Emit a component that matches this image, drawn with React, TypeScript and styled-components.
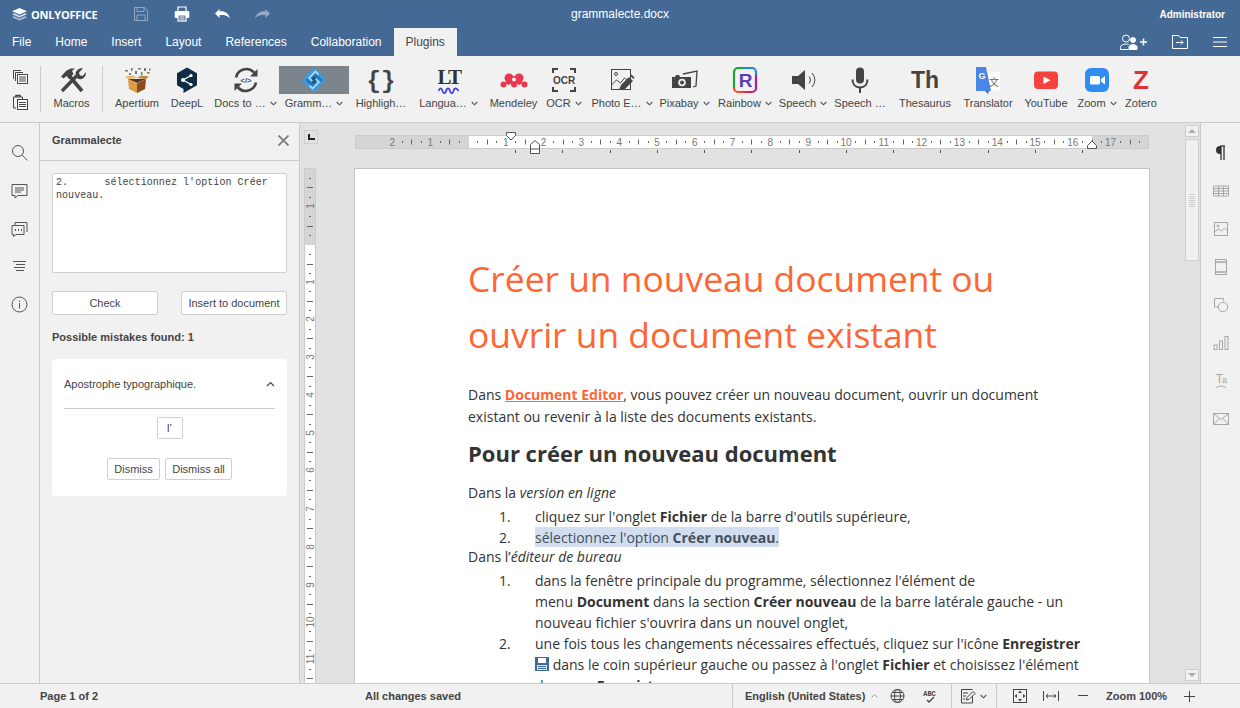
import React from "react";
import styled, { createGlobalStyle } from "styled-components";

const Global = createGlobalStyle`
  html, body { margin: 0; height: 708px; overflow: hidden; background: #f1f1f1; }
  * { box-sizing: border-box; }
  #root { height: 708px; }
`;

const App_ = styled.div`
  height: 708px; display: flex; flex-direction: column;
  font-family: "Liberation Sans", Arial, sans-serif; font-size: 11px; color: #444; overflow: hidden;
`;
const Header = styled.header`background: #446995; height: 56px; color: #fff; flex: none;`;
const TitleRow = styled.div`height: 28px; display: grid; grid-template-columns: 1fr auto 1fr; align-items: center;`;
const LeftCluster = styled.div`display: flex; align-items: center;`;
const Logo = styled.div`width: 121px; padding-left: 12px; display: flex; align-items: center; gap: 4px;`;
const LogoText = styled.span`font: 700 11px "Open Sans", sans-serif; letter-spacing: -0.2px; color: #fff;`;
const QuickBtn = styled.div<{ $dim?: boolean }>`
  width: 40.5px; height: 28px; display: flex; align-items: center; justify-content: center; opacity: ${p => (p.$dim ? 0.42 : 1)};
`;
const Mirror = styled.span`display: inline-flex; transform: scaleX(-1);`;
const DocTitle = styled.div`font-size: 12px; color: #fff;`;
const UserName = styled.div`justify-self: end; padding-right: 15px; font-weight: 700; font-size: 10px; color: #fff;`;
const TabRow = styled.div`height: 28px; display: flex; align-items: stretch;`;
const Tab = styled.div<{ $active?: boolean }>`
  padding: 0 12px; font-size: 12px; display: flex; align-items: center;
  background: ${p => (p.$active ? "#f1f1f1" : "transparent")}; color: ${p => (p.$active ? "#444" : "#fff")};
`;
const TabTools = styled.div`margin-left: auto; display: flex; align-items: center; padding-right: 3px;`;
const TabTool = styled.div<{ $w: number }>`width: ${p => p.$w}px; display: flex; justify-content: center; align-items: center;`;

const Toolbar = styled.div`height: 67px; flex: none; background: #f1f1f1; border-bottom: 1px solid #cbcbcb; display: flex; padding-top: 10px;`;
const ClipGroup = styled.div`width: 40px; height: 45px; display: flex; flex-direction: column; align-items: center; gap: 9px; padding-top: 3px;`;
const Sep = styled.div`width: 1px; height: 46px; background: #cbcbcb; flex: none;`;
const Item = styled.div<{ $w: number; $ml?: number }>`
  width: ${p => p.$w}px; margin-left: ${p => p.$ml ?? 0}px; flex: none; display: flex; flex-direction: column; align-items: center;
`;
const IconBox = styled.div<{ $on?: boolean }>`
  height: 28px; width: 100%; display: flex; align-items: center; justify-content: center; background: ${p => (p.$on ? "#7d858c" : "transparent")};
`;
const Label = styled.div`margin-top: 2px; height: 14px; line-height: 14px; font-size: 11px; color: #444; white-space: nowrap; display: flex; align-items: center; gap: 4px;`;

const Work = styled.div`flex: 1; display: flex; min-height: 0; background: #e2e2e2;`;
const Rail = styled.div<{ $left?: boolean }>`
  width: 40px; flex: none; background: #f1f1f1; display: flex; flex-direction: column; padding-top: ${p => (p.$left ? 10 : 11)}px;
  ${p => (p.$left ? "border-right: 1px solid #cbcbcb;" : "border-left: 1px solid #cbcbcb;")}
`;
const RailBtn = styled.div`height: 38px; display: flex; align-items: center; justify-content: center;`;
const Panel = styled.aside`width: 260px; flex: none; background: #f1f1f1; border-right: 1px solid #cbcbcb; display: flex; flex-direction: column;`;
const PanelHead = styled.div`height: 38px; border-bottom: 1px solid #cbcbcb; display: flex; align-items: center; justify-content: space-between; padding: 0 10px 3px 12px; font-weight: 700; font-size: 11px;`;
const PanelBody = styled.div`padding: 12px 12px 0; display: flex; flex-direction: column;`;
const TextBox = styled.div`
  height: 100px; background: #fff; border: 1px solid #cfcfcf; border-radius: 2px; padding: 2px 3px;
  font: 10px/13px "Liberation Mono", monospace; letter-spacing: 0.05px; color: #444; white-space: pre-wrap;
`;
const BtnRow = styled.div`display: flex; justify-content: space-between; margin-top: 18px;`;
const PanelBtn = styled.div<{ $w: number; $h?: number }>`
  width: ${p => p.$w}px; height: ${p => p.$h ?? 24}px; background: #fff; border: 1px solid #cfcfcf; border-radius: 2px;
  display: flex; align-items: center; justify-content: center; font-size: 11px; color: #444; white-space: nowrap;
`;
const Found = styled.div`margin-top: 16px; font-weight: 700; font-size: 11px; line-height: 13px;`;
const Card = styled.div`margin-top: 15px; height: 137px; background: #fff; border-radius: 4px; padding: 0 12px; display: flex; flex-direction: column;`;
const CardHead = styled.div`height: 50px; border-bottom: 1px solid #cbcbcb; display: flex; align-items: center; justify-content: space-between; font-size: 11px;`;
const Center = styled.div<{ $mt: number; $gap?: number }>`display: flex; justify-content: center; margin-top: ${p => p.$mt}px; gap: ${p => p.$gap ?? 0}px;`;

const Canvas = styled.main`flex: 1; min-width: 0; display: flex;`;
const CanvasMain = styled.div`flex: 1; min-width: 0; display: flex; flex-direction: column; overflow: hidden;`;
const RulerRow = styled.div`height: 45px; flex: none; display: flex; padding: 7px 0 0 4px;`;
const Corner = styled.div`width: 14px; height: 14px; border: 1px solid #cfcfcf; background: #e2e2e2; flex: none;`;
const CornerMark = styled.div`width: 7px; height: 6px; border-left: 2px solid #222; border-bottom: 2px solid #222; margin: 3px 0 0 3px;`;
const RulerSvg = styled.svg`margin-left: 37px; margin-top: -1px; overflow: visible; flex: none;`;
const PageRow = styled.div`flex: 1; min-height: 0; display: flex; padding-left: 4px; overflow: hidden;`;
const VRulerSvg = styled.svg`flex: none;`;
const Page = styled.article`
  width: 796px; height: 1100px; margin-left: 37px; flex: none; background: #fff; border: 1px solid #c2c2c2; border-bottom: 0;
  padding: 81px 0 0 113px; font: 14px/21px "Open Sans", sans-serif; color: #333;
`;
const H1 = styled.h1`margin: 0; font: 400 35.4px/56px "Open Sans", sans-serif; color: #ff6633; width: 600px;`;
const P = styled.p<{ $mt?: number; $mb?: number }>`margin: ${p => p.$mt ?? 0}px 0 ${p => p.$mb ?? 0}px; width: 600px;`;
const Intro = styled(P)`line-height: 22px;`;
const H2 = styled.h2`margin: 10px 0 0; font: 700 22px/30px "Open Sans", sans-serif; color: #333;`;
const DocLink = styled.a`color: #ff6633; font-weight: 700; text-decoration: underline;`;
const Li = styled.div`display: flex; padding-left: 31px;`;
const Num = styled.span`width: 36px; flex: none;`;
const LiText = styled.div`width: 560px;`;
const Sel = styled.span`background: #d2deef; color: #444f5e; padding: 1px 0 0; box-decoration-break: clone;`;
const FloppySvg = styled.svg`vertical-align: -1px;`;

const Scroll = styled.div`width: 14px; margin-right: 1px; padding-top: 2px; flex: none; display: flex; flex-direction: column; gap: 2px;`;
const ScrollBtn = styled.div<{ $mb?: number }>`height: 12px; margin-bottom: ${p => p.$mb ?? 0}px; background: #f1f1f1; border: 1px solid #cfcfcf; display: flex; align-items: center; justify-content: center;`;
const Arrow = styled.div<{ $down?: boolean }>`
  width: 0; height: 0; border-left: 4px solid transparent; border-right: 4px solid transparent;
  ${p => (p.$down ? "border-top: 4px solid #adadad;" : "border-bottom: 4px solid #adadad;")}
`;
const Thumb = styled.div`height: 122px; background: #f1f1f1; border: 1px solid #cfcfcf; display: flex; flex-direction: column; align-items: center; justify-content: center; gap: 1px;`;
const Grip = styled.div`width: 6px; height: 1px; background: #cfcfcf;`;
const ScrollGap = styled.div`flex: 1;`;

const Status = styled.footer`height: 25px; flex: none; background: #f1f1f1; border-top: 1px solid #cbcbcb; display: flex; align-items: stretch; font-weight: 700; font-size: 11px;`;
const StatusText = styled.div<{ $w: number; $pl: number; $ml?: number }>`width: ${p => p.$w}px; padding-left: ${p => p.$pl}px; margin-left: ${p => p.$ml ?? 0}px; flex: none; display: flex; align-items: center; white-space: nowrap;`;
const StatusGroup = styled.div<{ $w: number; $border?: boolean }>`
  width: ${p => p.$w}px; display: flex; align-items: center; flex: none; border-left: ${p => (p.$border ? "1px solid #cbcbcb" : "0")};
`;
const StatusIcon = styled.div<{ $w: number; $ml?: number; $mr?: number }>`width: ${p => p.$w}px; margin-left: ${p => p.$ml ?? 0}px; margin-right: ${p => p.$mr ?? 0}px; display: flex; justify-content: center; flex: none; align-items: center;`;

const Caret = () => (
  <svg width="7" height="5" viewBox="0 0 7 5" fill="none" stroke="#555" strokeWidth="1.1"><path d="M.7 1l2.8 2.8L6.3 1" /></svg>
);

const Sv = ({ s = 28, v = 28, children, ...r }: any) => (
  <svg width={s} height={s} viewBox={`0 0 ${v} ${v}`} fill="none" {...r}>{children}</svg>
);

const g = "#444";
const Copy = () => (
  <Sv s={16} v={16} stroke={g}><path d="M1.5 10V1.5H9" /><path d="M3.5 12V3.5H11" /><rect x="5.5" y="5.5" width="10" height="9" fill="#fff" /><path d="M7 8h7M7 10h7M7 12h7" /></Sv>
);
const Paste = () => (
  <Sv s={16} v={16} stroke={g}><path d="M4 14H1.5V3h9v2" /><path d="M4 3V1.5h4V3" strokeWidth="1.5" /><rect x="5.5" y="5.5" width="10" height="10" fill="#fff" /><path d="M7 8.5h7M7 10.5h7M7 12.5h7" /></Sv>
);
const Macros = () => (
  <Sv>
    <path d="M24 25L11 9.500" stroke={g} strokeWidth="3.600" />
    <path d="M3 10.500L8.500 4.500 13 2.500h4l-3 2.500 1.500 3L11 13 8.500 10 5.500 12.500z" fill={g} />
    <path d="M4 25L19 9.500" stroke={g} strokeWidth="3.400" />
    <path d="M17.500 7a6 6 0 0 1 7.500-4.500L21 6.500l.8 2.700 2.700.8L28 6.300a6 6 0 0 1-8.500 6.200z" fill={g} />
  </Sv>
);
const Apertium = () => (
  <Sv>
    <path d="M5 13h18l-9 4z" fill="#5e3213" />
    <path d="M5 13l9 4.500V27L6 23z" fill="#dc9c42" />
    <path d="M23 13l-9 4.500V27l8-4z" fill="#8a4a1b" />
    <path d="M5 13l-3-2.500 8-1 4 2.500z" fill="#eab566" />
    <path d="M23 13l3-2.500-8-1-4 2.500z" fill="#c28534" />
    <g fill="#777">
      <rect x="2" y="4" width="3" height="1.500" /><rect x="6" y="7" width="2" height="2" /><rect x="8" y="2" width="1.500" height="3" />
      <rect x="12" y="5" width="2" height="3" /><rect x="15" y="2" width="3" height="1.500" /><rect x="18" y="6" width="1.500" height="3" />
      <rect x="21" y="2" width="2" height="3" /><rect x="24" y="6" width="2.500" height="1.500" /><rect x="26" y="2.500" width="1.500" height="2" />
    </g>
  </Sv>
);
const DeepL = () => (
  <Sv>
    <path d="M14 1.500l10 5.700v12L14 25l-3.500 2v-4L4 19.200v-12z" fill="#0f2b46" />
    <path d="M10 14l8-4.500M10 14l8 4.500" stroke="#fff" strokeWidth="1.400" />
    <circle cx="10" cy="14" r="2" fill="#fff" /><circle cx="18" cy="9.500" r="1.600" fill="#fff" /><circle cx="18" cy="18.500" r="1.600" fill="#fff" />
  </Sv>
);
const Docs = () => (
  <Sv>
    <path d="M4 11.500A10.500 10.500 0 0 1 22 6.500" stroke={g} strokeWidth="2.600" />
    <path d="M24 16.500A10.500 10.500 0 0 1 6 21.500" stroke={g} strokeWidth="2.600" />
    <path d="M25.500 3v7.500h-7.500z" fill={g} /><path d="M2.500 25v-7.500H10z" fill={g} />
    <text x="14" y="17" fontSize="7.500" fontWeight="700" textAnchor="middle" fill={g} fontFamily="Liberation Sans">{"</>"}</text>
  </Sv>
);
const Gramm = () => (
  <Sv>
    <path d="M14 1.500L26.500 14 14 26.500 1.500 14z" fill="#3f9bdc" />
    <path d="M14 5.500L22.500 14 14 22.500 5.500 14z" fill="#2476b4" />
    <path d="M18.500 8.500L15.500 5.500 9 12l3 3M9.500 19.500l3 3L19 16l-3-3" stroke="#a8dcf7" strokeWidth="1.800" />
    <path d="M15 11l-2.500 2.500M15.500 14.500L13 17" stroke="#123f66" strokeWidth="1.500" />
  </Sv>
);
const Braces = () => (
  <Sv><text x="14" y="22" fontSize="24" fontWeight="700" textAnchor="middle" fill={g} fontFamily="Liberation Mono">{"{}"}</text></Sv>
);
const Lang = () => (
  <Sv>
    <text x="14" y="18" fontSize="21" textAnchor="middle" fill="#333" fontFamily="Liberation Serif" fontWeight="700" letterSpacing="-1.500">LT</text>
    <path d="M3.500 25c1.500-3.500 3-3.500 4 0 1.300 3 2.700 3 3.500 0 1-3.500 3-3.500 4 0 1 3 2.500 3 3.500 0 1-3.500 3-3.500 5 0" stroke="#4141d8" strokeWidth="1.800" />
  </Sv>
);
const Mendeley = () => (
  <Sv>
    <g fill="#e8384f">
      <circle cx="3.500" cy="18.500" r="3" /><circle cx="24.500" cy="18.500" r="3" /><circle cx="14" cy="18.500" r="3" />
      <circle cx="9" cy="12" r="4.500" /><circle cx="19" cy="12" r="4.500" />
      <path d="M5 17l4-7h10l4 7-4 2-5-3-5 3z" />
    </g>
    <circle cx="14" cy="13.500" r="2" fill="#f1f1f1" />
  </Sv>
);
const Ocr = () => (
  <Sv>
    <path d="M8 3H3v4M20 3h5v4M3 21v4h5M25 21v4h-5" stroke={g} strokeWidth="2" />
    <text x="14" y="18" fontSize="10" fontWeight="700" textAnchor="middle" fill={g} fontFamily="Liberation Sans">OCR</text>
  </Sv>
);
const Photo = () => (
  <Sv>
    <rect x="3.500" y="3.500" width="19" height="20" stroke={g} />
    <circle cx="8" cy="8" r="1.500" stroke={g} />
    <path d="M3.500 19l5-5 4 3 4-5 4 3" stroke={g} />
    <path d="M11 24l2-5 8-8 4 4-8 8z" fill={g} /><path d="M22 9.500l1.500-1 3 3-1 1.500z" fill={g} />
  </Sv>
);
const Pixabay = () => (
  <Sv>
    <path d="M12 8l14-3-1 15-3 1" stroke={g} strokeWidth="1.300" />
    <path d="M1 11h3l1-2h3l1 2h11v11H1z" fill={g} />
    <circle cx="11" cy="16.500" r="3.800" fill="#f1f1f1" /><circle cx="11" cy="16.500" r="2" fill={g} />
  </Sv>
);
const Rainbow = () => (
  <Sv>
    <defs>
      <linearGradient id="rbw" x1="0" y1="1" x2="1" y2="0">
        <stop offset="0" stopColor="#f5611e" /><stop offset=".35" stopColor="#e7175f" /><stop offset=".55" stopColor="#b31aa0" /><stop offset="1" stopColor="#c4148a" />
      </linearGradient>
    </defs>
    <path d="M3 9V6a4 4 0 0 1 4-4h5" stroke="#1ea739" strokeWidth="2.200" />
    <path d="M12 2h9a4 4 0 0 1 4 4v3" stroke="#1e88e0" strokeWidth="2.200" />
    <path d="M3 9v12" stroke="#1ea739" strokeWidth="2.200" />
    <path d="M25 9v13a4 4 0 0 1-4 4H7a4 4 0 0 1-4-4v-1" stroke="url(#rbw)" strokeWidth="2.200" />
    <text x="14.500" y="21" fontSize="19" fontWeight="700" textAnchor="middle" fill="#5a3fb6" fontFamily="Liberation Sans">R</text>
  </Sv>
);
const Speaker = () => (
  <Sv>
    <path d="M3 10h6l7-6v20l-7-6H3z" fill={g} />
    <path d="M20 10.500a5 5 0 0 1 0 7" stroke={g} /><path d="M23 7a10 10 0 0 1 0 14" stroke={g} />
  </Sv>
);
const Mic = () => (
  <Sv>
    <rect x="10" y="1.500" width="8" height="16" rx="4" fill={g} />
    <path d="M6.500 13.500c0 5 3 8 7.500 8s7.500-3 7.500-8" stroke={g} strokeWidth="2" />
    <path d="M14 21v6" stroke={g} strokeWidth="2" />
  </Sv>
);
const Th = () => (
  <Sv><text x="14" y="22" fontSize="23" fontWeight="700" textAnchor="middle" fill={g} fontFamily="Liberation Sans">Th</text></Sv>
);
const Translator = () => (
  <Sv>
    <rect x="14" y="6" width="12" height="19" fill="#fff" />
    <path d="M2 1h10l5 24H2z" fill="#4a86e8" />
    <path d="M15 25l-1 3-3-3z" fill="#3a66b8" />
    <text x="8" y="13" fontSize="9" fontWeight="700" textAnchor="middle" fill="#fff" fontFamily="Liberation Sans">G</text>
    <text x="20" y="20" fontSize="10" textAnchor="middle" fill="#666" fontFamily="Noto Sans CJK SC">文</text>
  </Sv>
);
const YouTube = () => (
  <Sv><rect x="2" y="5.500" width="24" height="17.500" rx="4" fill="#f4423c" /><path d="M11.500 10.500l7 3.800-7 3.800z" fill="#fff" /></Sv>
);
const Zoom = () => (
  <Sv><rect x="2" y="2" width="24" height="24" rx="6" fill="#2f8cf0" /><rect x="7" y="10" width="10" height="8.500" rx="1.500" fill="#fff" /><path d="M18 13l4-3v8.500l-4-3z" fill="#fff" /></Sv>
);
const Zotero = () => (
  <Sv><text x="14" y="23" fontSize="26" fontWeight="700" textAnchor="middle" fill="#dc3236" fontFamily="Liberation Sans">Z</text></Sv>
);

type T = [string, number, boolean, React.FC, boolean?];
const items: T[] = [
  ["Apertium", 50, false, Apertium], ["DeepL", 50, false, DeepL], ["Docs to …", 67, true, Docs],
  ["Gramm…", 70, true, Gramm, true], ["Highligh…", 64, false, Braces], ["Langua…", 71, true, Lang],
  ["Mendeley", 59, false, Mendeley], ["OCR", 42, true, Ocr], ["Photo E…", 74, true, Photo],
  ["Pixabay", 51, true, Pixabay], ["Rainbow", 70, true, Rainbow], ["Speech", 46, true, Speaker],
  ["Speech …", 68, false, Mic], ["Thesaurus", 62, false, Th], ["Translator", 64, false, Translator],
  ["YouTube", 52, false, YouTube], ["Zoom", 50, true, Zoom], ["Zotero", 38, false, Zotero],
];

const tabs = ["File", "Home", "Insert", "Layout", "References", "Collaboration"];

const W = "#fff";
const LogoMark = () => (
  <svg width="15" height="15" viewBox="0 0 15 15"><path d="M7.500 1L15 4.300 7.500 7.600 0 4.300z" fill={W} /><path d="M2 6.300L7.500 8.800 13 6.300l2 1L7.500 10.600 0 7.300z" fill={W} opacity=".8" /><path d="M2 9.300l5.500 2.500L13 9.300l2 1-7.500 3.300L0 10.300z" fill={W} opacity=".6" /></svg>
);
const SaveI = () => (
  <Sv s={14} v={14} stroke={W}><path d="M.5.500h10l3 3v10H.5z" /><path d="M3 .5v4h7v-4M3 13.500V8h8v5.500" /></Sv>
);
const PrintI = () => (
  <Sv s={16} v={16} stroke={W}><path d="M4 5V1h8v4" strokeWidth="1.200" /><rect x=".7" y="5" width="14.600" height="7" rx="1" fill={W} stroke="none" /><rect x="4" y="9" width="8" height="6" fill="#446995" stroke={W} strokeWidth="1.200" /><path d="M5.500 11h5M5.500 13h5" /></Sv>
);
const UndoI = () => (
  <svg width="15" height="10" viewBox="0 0 15 10"><path d="M0 4.500L4.500 0v2.400C9 1.600 13.500 3.500 15 9.500 12.500 6.500 9 5.400 4.500 6.300V9z" fill={W} /></svg>
);
const AddUser = () => (
  <svg width="28" height="16" viewBox="0 0 28 16" fill="none" stroke={W}>
    <circle cx="6" cy="4.500" r="3.500" /><path d="M.5 15.500v-2c0-2 2-3.500 5.500-3.500 1.500 0 2.500.3 3 .6M.5 15.500h8" />
    <circle cx="13" cy="6" r="2.500" fill={W} /><path d="M9 15.500v-2.500c0-1.500 2-2.300 4-2.300s4 .8 4 2.300v2.500z" fill={W} />
    <path d="M20 8h7M23.500 4.500v7" strokeWidth="1.500" />
  </svg>
);
const MoveI = () => (
  <svg width="16" height="14" viewBox="0 0 16 14" fill="none" stroke={W}><path d="M.5 13.500V.5h6l1.500 2h7.500v11z" /><path d="M4 7.500h7M9 5.500l2 2-2 2" /></svg>
);
const MenuI = () => (
  <svg width="14" height="10" viewBox="0 0 14 10" stroke={W}><path d="M0 .5h14M0 5h14M0 9.500h14" /></svg>
);
const CloseI = () => (
  <svg width="11" height="11" viewBox="0 0 11 11" stroke="#7a7a7a" strokeWidth="1.700"><path d="M.5.500l10 10M10.500.500l-10 10" /></svg>
);
const ChevUp = () => (
  <svg width="9" height="6" viewBox="0 0 9 6" fill="none" stroke="#444" strokeWidth="1.200"><path d="M1 5l3.500-3.500L8 5" /></svg>
);

const R = ({ children }: any) => <svg width="17" height="17" viewBox="0 0 17 17" fill="none" stroke="#555">{children}</svg>;
const leftRail = [
  <R><circle cx="7" cy="7" r="5.500" /><path d="M11 11l5.500 5.500" /></R>,
  <R><path d="M1 2.500h15v11H7l-3 2.500v-2.500H1z" /><path d="M4 6h9M4 8h9M4 10h6" /></R>,
  <R><path d="M4 5V2.500h12V12" /><path d="M1 5.500h12v9H5l-2.500 2V14.500H1z" fill="#f1f1f1" /><path d="M4 10h1M7 10h1M10 10h1" strokeWidth="2" /></R>,
  <R><path d="M2 3.500h13M5 6.500h9M3 9.500h11M5 12.500h8" /></R>,
  <R><circle cx="8.500" cy="8.500" r="7.500" /><path d="M8.500 7v5.500M8.500 4.500v1.300" /></R>,
];
const H = ({ children, c = "#a7a7a7" }: any) => <svg width="16" height="16" viewBox="0 0 16 16" fill="none" stroke={c}>{children}</svg>;
const rightRail = [
  <H c="#333"><path d="M11.500 1H7a4 4 0 0 0 0 8h1V1z" fill="#333" stroke="none" /><path d="M8 1v14M11 1v14" strokeWidth="1.300" /><path d="M7 1h5" strokeWidth="1.300" /></H>,
  <H><path d="M.5 3h15v10H.5z" /><path d="M.5 5.500h15M.5 8h15M.5 10.500h15M5.500 3v10M10.500 3v10" /></H>,
  <H><rect x="1.500" y="1.500" width="13" height="13" /><circle cx="5" cy="5" r="1" /><path d="M1.500 11l4-3 3 2 3-3 3 3" /></H>,
  <H><rect x="2.500" y=".5" width="11" height="15" /><path d="M2.500 3h11M2.500 13h11" strokeWidth="1.500" /></H>,
  <H><path d="M5 10H1.500V1.500h9V4" /><circle cx="10" cy="10" r="4.700" /></H>,
  <H><rect x="1" y="10" width="3" height="4.500" /><rect x="6.500" y="6" width="3" height="8.500" /><rect x="12" y="1.500" width="3" height="13" /></H>,
  <H><text x="6.500" y="10" fontSize="12" textAnchor="middle" fill="#a7a7a7" stroke="none" fontFamily="Liberation Sans">T</text><text x="11.500" y="10" fontSize="9" textAnchor="middle" fill="#a7a7a7" stroke="none" fontFamily="Liberation Sans">a</text><path d="M3 15c2.500-2.500 7.500-2.500 10 0" /></H>,
  <H><rect x=".5" y="2.500" width="15" height="11" /><path d="M.5 2.500L8 8.500l7.500-6M.5 13.500l5.500-6M15.500 13.500L10 7.500" /></H>,
];

const unit = 37.8;
const hNums = Array.from({ length: 20 }, (_, i) => i - 2);
const Ruler = () => {
  const ticks: [number, number][] = [];
  const push = (a: number) => {
    ticks.push([a + unit / 4, 2], [a + unit / 2, 5], [a + (3 * unit) / 4, 2]);
  };
  hNums.forEach(n => push(468 + n * unit));
  const visible = ticks.filter(([x]) => x > 358 && x < 1146);
  const stops = Array.from({ length: 13 }, (_, i) => 515 + i * 47.25);
  return (
    <RulerSvg width="796" height="30" viewBox="355 123 796 30">
      <rect x="355.500" y="129.500" width="793" height="13" fill="#d5d5d5" stroke="#cbcbcb" />
      <rect x="469" y="130" width="623" height="12" fill="#fff" />
      {visible.map(([x, h], i) => <line key={i} x1={Math.round(x) + .5} x2={Math.round(x) + .5} y1={136 - h / 2} y2={136 + h / 2} stroke="#666" />)}
      {hNums.filter(n => n !== 0).map(n => <text key={n} x={468 + n * unit} y={140} fontSize="10" fill="#777" textAnchor="middle" fontFamily="Liberation Sans">{Math.abs(n)}</text>)}
      {stops.map(x => <line key={x} x1={Math.round(x) + .5} x2={Math.round(x) + .5} y1={144} y2={147} stroke="#555" />)}
      <path d="M506.500 126.500h9v3l-4.500 4.500-4.500-4.500z" fill="#fff" stroke="#555" />
      <path d="M530.500 147.500v-9l4.500-4 4.500 4v9zM530.500 143h9" fill="#fff" stroke="#555" />
      <path d="M1087.500 142.500v-3l4.500-4.500 4.500 4.500v3z" fill="#fff" stroke="#555" />
    </RulerSvg>
  );
};

const vLabels: [string, number][] = [["", 168], ["1", 206], ["", 245], ["1", 282], ["2", 319], ["3", 357], ["4", 395], ["5", 433], ["6", 470], ["7", 509], ["8", 547], ["9", 585], ["10", 622], ["11", 659], ["", 697]];
const VRuler = () => {
  const ticks: [number, number][] = [];
  vLabels.forEach((l, i) => {
    if (i < vLabels.length - 1) {
      const a = l[1], d = vLabels[i + 1][1] - a;
      ticks.push([a + d / 4, 2], [a + d / 2, 6], [a + (3 * d) / 4, 2]);
    }
  });
  return (
    <VRulerSvg width="13" height="530" viewBox="304 168 13 530">
      <rect x="304.500" y="168.500" width="11" height="530" fill="#d5d5d5" stroke="#cbcbcb" />
      <rect x="305" y="245" width="10" height="460" fill="#fff" />
      {ticks.map(([y, w], i) => <line key={i} x1={310 - w / 2} x2={310 + w / 2} y1={Math.round(y) + .5} y2={Math.round(y) + .5} stroke="#666" />)}
      {vLabels.map(([t, y], i) => <text key={i} fontSize="10" fill="#777" textAnchor="middle" fontFamily="Liberation Sans" transform={`translate(313.500 ${y}) rotate(-90)`}>{t}</text>)}
    </VRulerSvg>
  );
};

const Floppy = () => (
  <FloppySvg width="14" height="14" viewBox="0 0 14 14"><rect width="14" height="14" fill="#3d6a9c" /><rect x="3" y="1" width="8" height="5" fill="#fff" /><rect x="2" y="8" width="10" height="5" fill="#dfe8f2" /><path d="M3 9.500h8M3 11.500h8" stroke="#3d6a9c" /></FloppySvg>
);

const SC = ({ w = 16, children }: any) => <svg width={w} height="16" viewBox={`0 0 ${w} 16`} fill="none" stroke="#444">{children}</svg>;

export default function App() {
  return (
    <App_>
      <Global />
      <Header>
        <TitleRow>
          <LeftCluster>
            <Logo><LogoMark /><LogoText>ONLYOFFICE</LogoText></Logo>
            <QuickBtn $dim><SaveI /></QuickBtn>
            <QuickBtn><PrintI /></QuickBtn>
            <QuickBtn><UndoI /></QuickBtn>
            <QuickBtn $dim><Mirror><UndoI /></Mirror></QuickBtn>
          </LeftCluster>
          <DocTitle>grammalecte.docx</DocTitle>
          <UserName>Administrator</UserName>
        </TitleRow>
        <TabRow>
          {tabs.map(t => <Tab key={t}>{t}</Tab>)}
          <Tab $active>Plugins</Tab>
          <TabTools>
            <TabTool $w={46}><AddUser /></TabTool>
            <TabTool $w={46}><MoveI /></TabTool>
            <TabTool $w={34}><MenuI /></TabTool>
          </TabTools>
        </TabRow>
      </Header>
      <Toolbar>
        <ClipGroup><Copy /><Paste /></ClipGroup>
        <Sep />
        <Item $w={61}><IconBox><Macros /></IconBox><Label>Macros</Label></Item>
        <Sep />
        {items.map(([l, w, c, I, on], i) => (
          <Item key={i} $w={w} $ml={i === 0 ? 9 : 0}>
            <IconBox $on={on}><I /></IconBox>
            <Label>{l}{c && <Caret />}</Label>
          </Item>
        ))}
      </Toolbar>
      <Work>
        <Rail $left>{leftRail.map((x, i) => <RailBtn key={i}>{x}</RailBtn>)}</Rail>
        <Panel>
          <PanelHead>Grammalecte<CloseI /></PanelHead>
          <PanelBody>
            <TextBox>{"2.      sélectionnez l'option Créer\nnouveau."}</TextBox>
            <BtnRow><PanelBtn $w={106}>Check</PanelBtn><PanelBtn $w={106}>Insert to document</PanelBtn></BtnRow>
            <Found>Possible mistakes found: 1</Found>
            <Card>
              <CardHead>Apostrophe typographique.<ChevUp /></CardHead>
              <Center $mt={8}><PanelBtn $w={26} $h={22}>l’</PanelBtn></Center>
              <Center $mt={19} $gap={5}><PanelBtn $w={53} $h={22}>Dismiss</PanelBtn><PanelBtn $w={67} $h={22}>Dismiss all</PanelBtn></Center>
            </Card>
          </PanelBody>
        </Panel>
        <Canvas>
          <CanvasMain>
            <RulerRow><Corner><CornerMark /></Corner><Ruler /></RulerRow>
            <PageRow>
              <VRuler />
              <Page>
                <H1>Créer un nouveau document ou ouvrir un document existant</H1>
                <Intro $mt={22}>Dans <DocLink>Document Editor</DocLink>, vous pouvez créer un nouveau document, ouvrir un document existant ou revenir à la liste des documents existants.</Intro>
                <H2>Pour créer un nouveau document</H2>
                <P $mt={14} $mb={3}>Dans la <em>version en ligne</em></P>
                <Li><Num>1.</Num><LiText>cliquez sur l'onglet <b>Fichier</b> de la barre d'outils supérieure,</LiText></Li>
                <Li><Num>2.</Num><LiText><Sel>sélectionnez l'option <b>Créer nouveau</b>.</Sel></LiText></Li>
                <P $mt={-2} $mb={3}>Dans l’<em>éditeur de bureau</em></P>
                <Li><Num>1.</Num><LiText>dans la fenêtre principale du programme, sélectionnez l'élément de<br />menu <b>Document</b> dans la section <b>Créer nouveau</b> de la barre latérale gauche - un nouveau fichier s'ouvrira dans un nouvel onglet,</LiText></Li>
                <Li><Num>2.</Num><LiText>une fois tous les changements nécessaires effectués, cliquez sur l'icône <b>Enregistrer</b> <Floppy /> dans le coin supérieur gauche ou passez à l'onglet <b>Fichier</b> et choisissez l'élément de menu <b>Enregistrer</b>.</LiText></Li>
              </Page>
            </PageRow>
          </CanvasMain>
          <Scroll>
            <ScrollBtn><Arrow /></ScrollBtn>
            <Thumb>{Array.from({ length: 7 }).map((_, i) => <Grip key={i} />)}</Thumb>
            <ScrollGap />
            <ScrollBtn $mb={2}><Arrow $down /></ScrollBtn>
          </Scroll>
        </Canvas>
        <Rail>{rightRail.map((x, i) => <RailBtn key={i}>{x}</RailBtn>)}</Rail>
      </Work>
      <Status>
        <StatusText $w={325} $pl={40}>Page 1 of 2</StatusText>
        <StatusText $w={407} $pl={40}>All changes saved</StatusText>
        <StatusGroup $w={219} $border>
          <StatusText $w={140} $pl={12}>English (United States)</StatusText>
          <StatusIcon $w={7} $ml={-2}><svg width="7" height="4" viewBox="0 0 7 4" fill="none" stroke="#999"><path d="M.5 3.500l3-3 3 3" /></svg></StatusIcon>
          <StatusIcon $w={38}><SC w={15}><circle cx="7.500" cy="8" r="6.500" /><ellipse cx="7.500" cy="8" rx="3" ry="6.500" /><path d="M1 8h13M2 4.500h11M2 11.500h11" /></SC></StatusIcon>
          <StatusIcon $w={26}><svg width="15" height="15" viewBox="0 0 15 15" fill="none"><text x="7.500" y="7" fontSize="7" fontWeight="700" fill="#444" textAnchor="middle" fontFamily="Liberation Mono">ABC</text><path d="M5 11l2 2 5-5" stroke="#444" strokeWidth="1.300" /></svg></StatusIcon>
        </StatusGroup>
        <StatusGroup $w={45} $border>
          <StatusIcon $w={16} $ml={8} $mr={4}><SC><path d="M12.500 7v8h-11V1.500h11" /><path d="M3 5h5M3 8h3M3 11h2" /><path d="M6.500 12l.5-2.500L13 3.500l2 2-6 6z" fill="#f1f1f1" /></SC></StatusIcon>
          <Caret />
        </StatusGroup>
        <StatusGroup $w={244} $border>
          <StatusIcon $w={46}><SC w={14}><rect x=".5" y="1.500" width="13" height="13" /><path d="M7 2.500l-2 2.500h4zM7 13.500l-2-2.500h4zM1.500 8l2.500-2v4zM12.500 8l-2.500-2v4z" fill="#444" stroke="none" /></SC></StatusIcon>
          <StatusIcon $w={16}><SC w={16}><path d="M.5 3v10M15.500 3v10M3 8h10M5 6L3 8l2 2M11 6l2 2-2 2" /></SC></StatusIcon>
          <StatusIcon $w={48}><svg width="10" height="2" stroke="#444"><path d="M0 .5h10" /></svg></StatusIcon>
          <StatusText $w={62} $pl={0} $ml={-1}>Zoom 100%</StatusText>
          <StatusIcon $w={42}><svg width="11" height="11" stroke="#444"><path d="M0 5.500h11M5.500 0v11" /></svg></StatusIcon>
        </StatusGroup>
      </Status>
    </App_>
  );
}
